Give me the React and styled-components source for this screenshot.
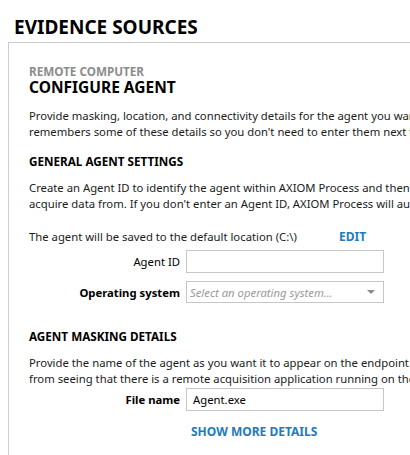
import React from 'react';
import styled, { createGlobalStyle } from 'styled-components';

const GlobalStyle = createGlobalStyle`
  html, body {
    margin: 0;
    padding: 0;
    background: #fff;
    overflow: hidden;
  }
  body {
    font-family: 'Noto Sans', 'Open Sans', sans-serif;
    color: #1b1b1b;
  }
`;

const Page = styled.div`
  width: 410px;
  height: 455px;
  overflow: hidden;
`;

const PageTitle = styled.h1`
  margin: 0;
  padding: 15px 0 0 14px;
  height: 27px;
  font-size: 19px;
  line-height: 24px;
  font-weight: 700;
  color: #000;
`;

const Panel = styled.div`
  margin-left: 8px;
  width: 600px;
  height: 420px;
  border-top: 1px solid #cccccc;
  border-left: 1px solid #cccccc;
  padding: 21px 0 0 20px;
  box-sizing: border-box;
`;

const Eyebrow = styled.div`
  font-size: 11.7px;
  line-height: 14px;
  font-weight: 700;
  color: #8c8c8c;
`;

const Title = styled.h2`
  margin: 0;
  font-size: 15.5px;
  line-height: 18px;
  font-weight: 700;
  color: #000;
`;

const Paragraph = styled.p`
  margin: ${({ $top }) => $top || 0}px 0 0;
  font-size: 11.3px;
  line-height: 16px;
  white-space: nowrap;
`;

const SectionHeading = styled.h3`
  margin: ${({ $top }) => $top}px 0 0;
  font-size: 11.7px;
  line-height: 16px;
  font-weight: 700;
  color: #000;
`;

const LinkButton = styled.button`
  border: 0;
  background: none;
  padding: 0;
  font-family: inherit;
  font-size: 12px;
  line-height: 16px;
  font-weight: 700;
  color: #1c7bc1;
  cursor: pointer;
  text-align: left;
`;

const LocationRow = styled.div`
  display: grid;
  grid-template-columns: 310px auto;
  align-items: center;
  margin-top: 17px;
  font-size: 11.3px;
  line-height: 16px;
`;

const FieldRow = styled.div`
  display: grid;
  grid-template-columns: 151px 198px;
  column-gap: 6px;
  align-items: center;
  margin-top: ${({ $top }) => $top}px;
`;

const Label = styled.label`
  text-align: right;
  font-size: 11.3px;
  font-weight: ${({ $bold }) => ($bold ? 700 : 400)};
  color: #000;
  white-space: nowrap;
`;

const TextInput = styled.input`
  box-sizing: border-box;
  height: 23px;
  width: 198px;
  border: 1px solid #c6c6c6;
  padding: 0 6px;
  font-family: inherit;
  font-size: 11.3px;
  color: #000;
  outline: none;
`;

const Select = styled.div`
  box-sizing: border-box;
  height: 22px;
  width: 198px;
  border: 1px solid #c6c6c6;
  padding: 0 8px 0 3px;
  display: flex;
  align-items: center;
  justify-content: space-between;
  font-size: 11.3px;
  font-style: italic;
  color: #9a9a9a;
`;

const Caret = styled.span`
  width: 0;
  height: 0;
  border-left: 4px solid transparent;
  border-right: 4px solid transparent;
  border-top: 4px solid #8a8a8a;
`;

const MoreRow = styled.div`
  margin: 8px 0 0 162px;
`;

export default function App() {
  return (
    <Page>
      <GlobalStyle />
      <PageTitle>EVIDENCE SOURCES</PageTitle>
      <Panel>
        <Eyebrow>REMOTE COMPUTER</Eyebrow>
        <Title>CONFIGURE AGENT</Title>
        <Paragraph $top={12}>
          Provide masking, location, and connectivity details for the agent you want to deploy. AXIOM Process
          <br />
          remembers some of these details so you don't need to enter them next time.
        </Paragraph>
        <SectionHeading $top={13}>GENERAL AGENT SETTINGS</SectionHeading>
        <Paragraph $top={11}>
          Create an Agent ID to identify the agent within AXIOM Process and then select the endpoint to
          <br />
          acquire data from. If you don't enter an Agent ID, AXIOM Process will automatically create one.
        </Paragraph>
        <LocationRow>
          <span>The agent will be saved to the default location (C:\)</span>
          <LinkButton>EDIT</LinkButton>
        </LocationRow>
        <FieldRow $top={5}>
          <Label>Agent ID</Label>
          <TextInput />
        </FieldRow>
        <FieldRow $top={8}>
          <Label $bold>Operating system</Label>
          <Select>
            <span>Select an operating system...</span>
            <Caret />
          </Select>
        </FieldRow>
        <SectionHeading $top={25}>AGENT MASKING DETAILS</SectionHeading>
        <Paragraph $top={11}>
          Provide the name of the agent as you want it to appear on the endpoint. This prevents users
          <br />
          from seeing that there is a remote acquisition application running on their computer.
        </Paragraph>
        <FieldRow $top={1}>
          <Label $bold>File name</Label>
          <TextInput defaultValue="Agent.exe" />
        </FieldRow>
        <MoreRow>
          <LinkButton>SHOW MORE DETAILS</LinkButton>
        </MoreRow>
      </Panel>
    </Page>
  );
}
